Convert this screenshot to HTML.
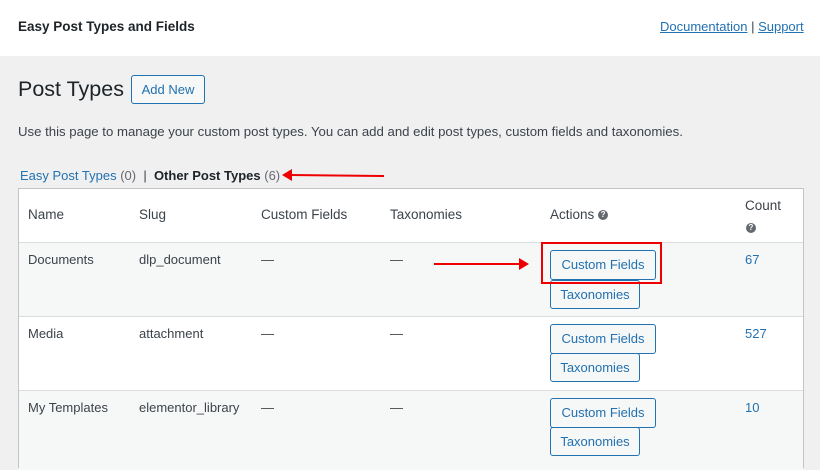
<!DOCTYPE html>
<html><head><style>
*{box-sizing:border-box;margin:0;padding:0}
body{width:820px;height:458px;overflow:hidden;background:#f0f0f1;font-family:"Liberation Sans",sans-serif;color:#3c434a;position:relative;font-size:13px}
.hdr{position:absolute;left:0;top:0;width:820px;height:56px;background:#fff}
.a{position:absolute;white-space:nowrap}
.link{color:#2271b1}
.btn{position:absolute;border:1px solid #2271b1;color:#2271b1;background:#f6f7f7;border-radius:3px;font-size:13px;text-align:center;white-space:nowrap}
.tbl{position:absolute;left:18px;top:188px;width:786px;height:280px;border:1px solid #c3c4c7;background:#fff}
.row{position:absolute;left:0;width:784px;border-top:1px solid #dcdcde}
.q{display:inline-block;width:10px;height:10px;border-radius:50%;background:#646970;color:#fff;font-size:8px;line-height:10px;text-align:center;font-weight:bold;vertical-align:middle}
</style></head><body>
<div class="hdr"></div>
<div class="a" style="left:18px;top:19px;font-size:13.5px;font-weight:bold;color:#1d2327">Easy Post Types and Fields</div>
<div class="a" style="left:660px;top:19px;font-size:13px"><span class="link" style="text-decoration:underline">Documentation</span> | <span class="link" style="text-decoration:underline">Support</span></div>
<div class="a" style="left:18px;top:77px;font-size:21.5px;color:#1d2327">Post Types</div>
<div class="btn" style="left:131px;top:75px;width:74px;height:29px;line-height:27px">Add New</div>
<div class="a" style="left:18px;top:124px;font-size:13.2px">Use this page to manage your custom post types. You can add and edit post types, custom fields and taxonomies.</div>
<div class="a" style="left:20px;top:168px;font-size:13px"><span class="link">Easy Post Types</span> <span style="color:#646970">(0)</span> &nbsp;|&nbsp; <b style="color:#1d2327">Other Post Types</b> <span style="color:#646970">(6)</span></div>
<svg class="a" style="left:282px;top:168px" width="104" height="14"><line x1="8" y1="7" x2="102" y2="8" stroke="#e00" stroke-width="2"/><polygon points="0,7 10,1 10,13" fill="#e00"/></svg>
<div class="tbl">
<div class="row" style="top:53px;height:74px;background:#f6f7f7"></div>
<div class="row" style="top:127px;height:74px;background:#fff"></div>
<div class="row" style="top:201px;height:80px;background:#f6f7f7"></div>
</div>
<div class="a" style="left:28px;top:207px;font-size:13.5px">Name</div>
<div class="a" style="left:139px;top:207px;font-size:13.5px">Slug</div>
<div class="a" style="left:261px;top:207px;font-size:13.5px">Custom Fields</div>
<div class="a" style="left:390px;top:207px;font-size:13.5px">Taxonomies</div>
<div class="a" style="left:550px;top:207px;font-size:13.5px">Actions <span class="q">?</span></div>
<div class="a" style="left:745px;top:198px;font-size:13.5px">Count</div>
<div class="a" style="left:746px;top:219px"><span class="q">?</span></div>

<div class="a" style="left:28px;top:252px">Documents</div><div class="a" style="left:139px;top:252px">dlp_document</div><div class="a" style="left:261px;top:252px">—</div><div class="a" style="left:390px;top:252px">—</div><div class="a link" style="left:745px;top:252px">67</div>
<div class="a" style="left:28px;top:326px">Media</div><div class="a" style="left:139px;top:326px">attachment</div><div class="a" style="left:261px;top:326px">—</div><div class="a" style="left:390px;top:326px">—</div><div class="a link" style="left:745px;top:326px">527</div>
<div class="a" style="left:28px;top:400px">My Templates</div><div class="a" style="left:139px;top:400px">elementor_library</div><div class="a" style="left:261px;top:400px">—</div><div class="a" style="left:390px;top:400px">—</div><div class="a link" style="left:745px;top:400px">10</div>

<div class="btn" style="left:550px;top:250px;width:106px;height:30px;line-height:28px">Custom Fields</div>
<div class="btn" style="left:550px;top:280px;width:90px;height:29px;line-height:27px">Taxonomies</div>
<div class="btn" style="left:550px;top:324px;width:106px;height:30px;line-height:28px">Custom Fields</div>
<div class="btn" style="left:550px;top:353px;width:90px;height:29px;line-height:27px">Taxonomies</div>
<div class="btn" style="left:550px;top:398px;width:106px;height:30px;line-height:28px">Custom Fields</div>
<div class="btn" style="left:550px;top:427px;width:90px;height:29px;line-height:27px">Taxonomies</div>
<div class="a" style="left:541px;top:242px;width:121px;height:42px;border:2px solid #e00"></div>
<svg class="a" style="left:434px;top:257px" width="96" height="14"><line x1="0" y1="7" x2="86" y2="7" stroke="#e00" stroke-width="2"/><polygon points="95,7 85,1 85,13" fill="#e00"/></svg>
</body></html>
